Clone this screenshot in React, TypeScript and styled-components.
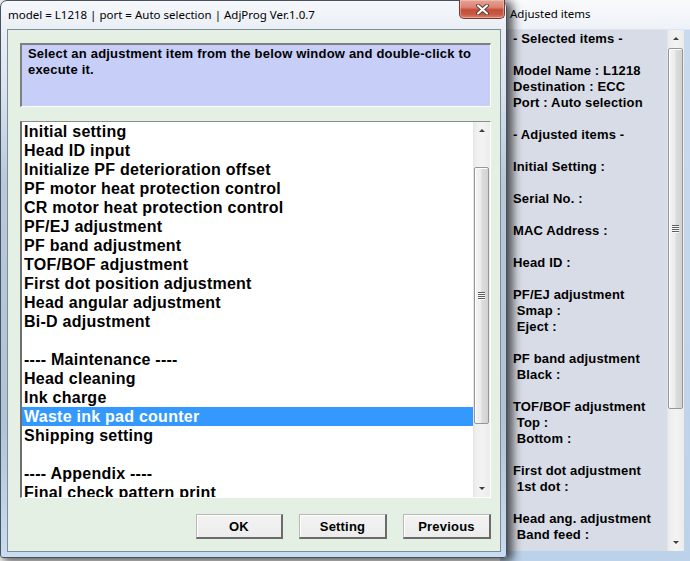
import React from "react";
import styled, { createGlobalStyle } from "styled-components";

const GlobalStyle = createGlobalStyle`
  html, body { margin: 0; padding: 0; background: #ffffff; }
  #root { width: 690px; height: 561px; }
`;

const Desktop = styled.div`
  position: relative;
  width: 690px;
  height: 561px;
  overflow: hidden;
  background: #ffffff;
  font-family: "Liberation Sans", Arial, sans-serif;
`;

/* ---------- background window: Adjusted items ---------- */

const SideWindow = styled.div`
  position: absolute;
  left: 500px;
  top: 0;
  width: 190px;
  height: 561px;
  display: flex;
  flex-direction: column;
  background: linear-gradient(
    to bottom,
    #f9fafc 0,
    #eef2f8 29px,
    #c8daee 30px,
    #bcd2ea 100%
  );
`;

const SideTitle = styled.div`
  height: 30px;
  box-sizing: border-box;
  padding: 6px 0 0 10px;
  font-family: "Noto Sans", "Open Sans", sans-serif;
  font-size: 11.5px;
  line-height: 16px;
  color: #000;
`;

const SideBody = styled.div`
  display: flex;
  height: 521px;
  margin-left: 8px;
  margin-right: 6px;
`;

const SidePanel = styled.div`
  flex: 1;
  background: #d8dce6;
  padding: 1px 0 0 5px;
  font-size: 13px;
  font-weight: bold;
  letter-spacing: 0.15px;
  line-height: 16px;
  color: #000;
  overflow: hidden;
`;

const SideLine = styled.div`
  height: 16px;
  white-space: pre;
`;

/* ---------- main window ---------- */

const MainWindow = styled.div`
  position: absolute;
  left: 0;
  top: 0;
  width: 507px;
  height: 558px;
  box-sizing: border-box;
  border: 1px solid #46525f;
  border-radius: 7px 7px 3px 3px;
  background: linear-gradient(
    to bottom,
    #f6f8fb 0,
    #eaeff5 28px,
    #d9e3ee 90px,
    #b9c9da 180px,
    #b1c3d6 420px,
    #c3d6ea 520px,
    #cadcef 100%
  );
  box-shadow: 4px 2px 10px 2px rgba(0, 0, 0, 0.65);
  display: flex;
  flex-direction: column;
`;

const TitleBar = styled.div`
  height: 28px;
  display: flex;
  justify-content: space-between;
  align-items: flex-start;
  flex-shrink: 0;
`;

const TitleText = styled.div`
  padding: 6px 0 0 7px;
  font-family: "Noto Sans", "Open Sans", sans-serif;
  font-size: 11.5px;
  line-height: 16px;
  color: #000;
  white-space: nowrap;
`;

const CloseButton = styled.div`
  width: 46px;
  height: 19px;
  margin: -1px 1px 0 0;
  box-sizing: border-box;
  border: 1px solid #7a3a32;
  border-top: none;
  border-radius: 0 0 5px 5px;
  background: linear-gradient(
    to bottom,
    #e6a396 0,
    #d98474 40%,
    #c64c38 55%,
    #c75a45 80%,
    #d68670 100%
  );
  box-shadow: inset 0 0 0 1px rgba(255, 210, 200, 0.45);
  display: flex;
  align-items: center;
  justify-content: center;
`;

const Client = styled.div`
  flex: 1;
  margin: 0 5px 5px 6px;
  box-sizing: border-box;
  border: 1px solid #7d8b9a;
  background: #e3f0e3;
  padding: 13px 9px 12px 12px;
  display: flex;
  flex-direction: column;
`;

const InfoBox = styled.div`
  height: 64px;
  flex-shrink: 0;
  box-sizing: border-box;
  border-style: solid;
  border-width: 2px 1px 1px 2px;
  border-color: #7f7f7f #ffffff #ffffff #7f7f7f;
  background: #c7cff9;
  padding: 1px 6px 0 6px;
  font-size: 13px;
  font-weight: bold;
  letter-spacing: 0.2px;
  line-height: 16px;
  color: #000;
`;

const ListBox = styled.div`
  height: 377px;
  margin-top: 14px;
  flex-shrink: 0;
  box-sizing: border-box;
  border-style: solid;
  border-width: 1px 1px 1px 2px;
  border-color: #8c8c8c #ffffff #ffffff #6f6f6f;
  background: #ffffff;
  display: flex;
`;

const ListItems = styled.div`
  flex: 1;
  overflow: hidden;
`;

const ListItem = styled.div<{ $selected?: boolean }>`
  height: 19px;
  padding-left: 2px;
  font-size: 16px;
  font-weight: bold;
  letter-spacing: 0.25px;
  line-height: 19px;
  white-space: nowrap;
  color: ${(p) => (p.$selected ? "#ffffff" : "#000000")};
  background: ${(p) => (p.$selected ? "#3399ff" : "transparent")};
`;

const ButtonRow = styled.div`
  margin-top: 16px;
  height: 25px;
  display: flex;
  justify-content: flex-end;
  gap: 16px;
`;

const PushButton = styled.div<{ $w: number }>`
  width: ${(p) => p.$w}px;
  height: 25px;
  box-sizing: border-box;
  border-style: solid;
  border-width: 1px 2px 2px 1px;
  border-color: #b9b9b9 #6b6b6b #6b6b6b #b9b9b9;
  background: linear-gradient(to bottom, #f3f3f3, #ececec);
  box-shadow: inset 1px 1px 0 #ffffff;
  font-size: 13px;
  font-weight: bold;
  letter-spacing: 0.2px;
  color: #000;
  display: flex;
  align-items: center;
  justify-content: center;
`;

/* ---------- scrollbar ---------- */

const ScrollBar = styled.div`
  width: 17px;
  flex-shrink: 0;
  display: flex;
  flex-direction: column;
  background: linear-gradient(
    to right,
    #e2e2e2 0,
    #ededed 2px,
    #f3f3f3 50%,
    #ececec 100%
  );
`;

const ArrowBox = styled.div`
  height: 17px;
  flex-shrink: 0;
  display: flex;
  align-items: center;
  justify-content: center;
`;

const ArrowUp = styled.div`
  width: 0;
  height: 0;
  border-left: 3px solid transparent;
  border-right: 3px solid transparent;
  border-bottom: 3px solid #3f3f3f;
`;

const ArrowDown = styled.div`
  width: 0;
  height: 0;
  border-left: 3px solid transparent;
  border-right: 3px solid transparent;
  border-top: 3px solid #3f3f3f;
`;

const Track = styled.div<{ $offset: number }>`
  flex: 1;
  padding-top: ${(p) => p.$offset}px;
  display: flex;
  flex-direction: column;
  align-items: center;
`;

const Thumb = styled.div<{ $h: number }>`
  width: 15px;
  height: ${(p) => p.$h}px;
  box-sizing: border-box;
  border: 1px solid #979797;
  border-radius: 2px;
  background: linear-gradient(
    to right,
    #f4f4f4 0,
    #ececec 45%,
    #dcdcdc 55%,
    #d2d2d2 100%
  );
  box-shadow: inset 1px 1px 0 #ffffff;
  display: flex;
  flex-direction: column;
  align-items: center;
  justify-content: center;
  gap: 1px;
`;

const GripLine = styled.div`
  width: 7px;
  height: 1px;
  background: #5f5f5f;
  box-shadow: 0 1px 0 #f8f8f8;
`;

function Scroll({ offset, thumb }: { offset: number; thumb: number }) {
  return (
    <ScrollBar>
      <ArrowBox>
        <ArrowUp />
      </ArrowBox>
      <Track $offset={offset}>
        <Thumb $h={thumb}>
          <GripLine />
          <GripLine />
          <GripLine />
          <GripLine />
        </Thumb>
      </Track>
      <ArrowBox>
        <ArrowDown />
      </ArrowBox>
    </ScrollBar>
  );
}

const listItems = [
  "Initial setting",
  "Head ID input",
  "Initialize PF deterioration offset",
  "PF motor heat protection control",
  "CR motor heat protection control",
  "PF/EJ adjustment",
  "PF band adjustment",
  "TOF/BOF adjustment",
  "First dot position adjustment",
  "Head angular adjustment",
  "Bi-D adjustment",
  "",
  "---- Maintenance ----",
  "Head cleaning",
  "Ink charge",
  "Waste ink pad counter",
  "Shipping setting",
  "",
  "---- Appendix ----",
  "Final check pattern print",
];

const sideLines = [
  "- Selected items -",
  "",
  "Model Name : L1218",
  "Destination : ECC",
  "Port : Auto selection",
  "",
  "- Adjusted items -",
  "",
  "Initial Setting :",
  "",
  "Serial No. :",
  "",
  "MAC Address :",
  "",
  "Head ID :",
  "",
  "PF/EJ adjustment",
  " Smap :",
  " Eject :",
  "",
  "PF band adjustment",
  " Black :",
  "",
  "TOF/BOF adjustment",
  " Top :",
  " Bottom :",
  "",
  "First dot adjustment",
  " 1st dot :",
  "",
  "Head ang. adjustment",
  " Band feed :",
];

export default function App() {
  return (
    <>
      <GlobalStyle />
      <Desktop>
        <SideWindow>
          <SideTitle>Adjusted items</SideTitle>
          <SideBody>
            <SidePanel>
              {sideLines.map((l, i) => (
                <SideLine key={i}>{l}</SideLine>
              ))}
            </SidePanel>
            <Scroll offset={1} thumb={361} />
          </SideBody>
        </SideWindow>

        <MainWindow>
          <TitleBar>
            <TitleText>
              model = L1218 | port = Auto selection | AdjProg Ver.1.0.7
            </TitleText>
            <CloseButton>
              <svg width="13" height="11" viewBox="0 0 13 11">
                <path
                  d="M2 1.5 L11 9.5 M11 1.5 L2 9.5"
                  stroke="#5a3a34"
                  strokeWidth="3.8"
                  strokeLinecap="round"
                />
                <path
                  d="M2 1.5 L11 9.5 M11 1.5 L2 9.5"
                  stroke="#ffffff"
                  strokeWidth="2.1"
                  strokeLinecap="round"
                />
              </svg>
            </CloseButton>
          </TitleBar>
          <Client>
            <InfoBox>
              Select an adjustment item from the below window and double-click to
              execute it.
            </InfoBox>
            <ListBox>
              <ListItems>
                {listItems.map((t, i) => (
                  <ListItem key={i} $selected={t === "Waste ink pad counter"}>
                    {t}
                  </ListItem>
                ))}
              </ListItems>
              <Scroll offset={28} thumb={257} />
            </ListBox>
            <ButtonRow>
              <PushButton $w={87}>OK</PushButton>
              <PushButton $w={88}>Setting</PushButton>
              <PushButton $w={88}>Previous</PushButton>
            </ButtonRow>
          </Client>
        </MainWindow>
      </Desktop>
    </>
  );
}
